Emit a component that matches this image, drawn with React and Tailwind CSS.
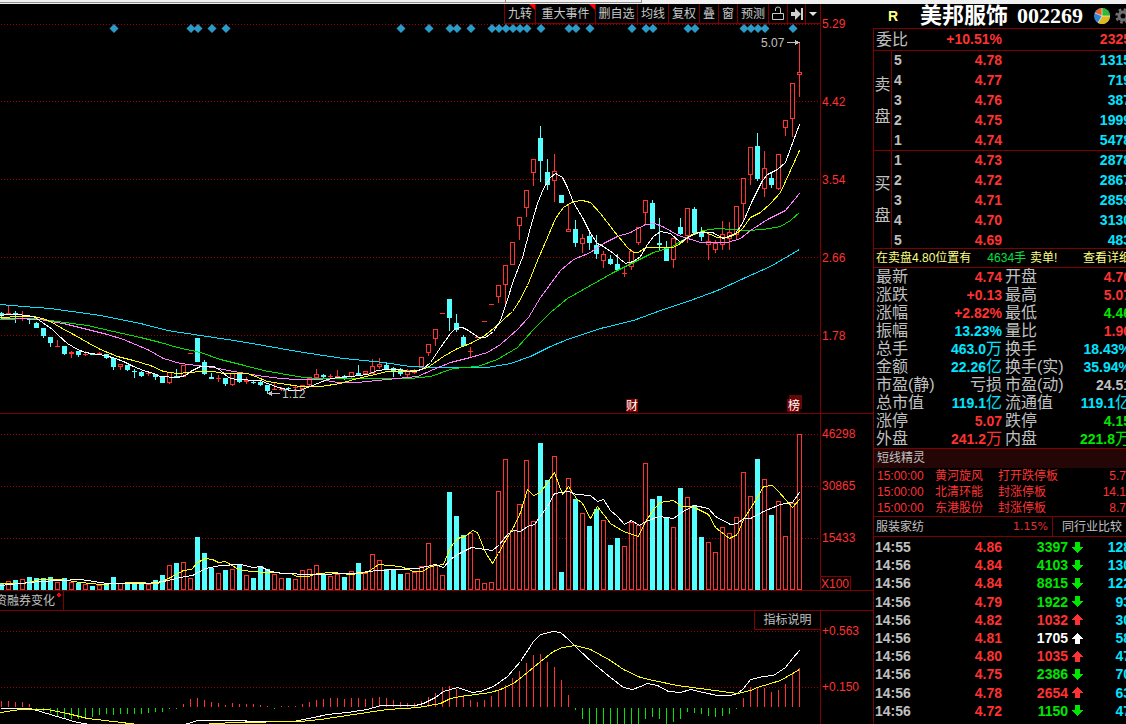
import React from 'react';

// [type, bodyTop, bodyBottom, wickTop, wickBottom], one entry per session
const CANDLES = [
  ['c', 313, 315, 312, 317], ['r', 313, 314, 305, 315], ['c', 313, 315, 311, 323], ['r', 316, 317, 311, 321],
  ['c', 319, 320, 318, 324], ['c', 323, 328, 322, 328], ['c', 328, 336, 328, 338], ['c', 337, 343, 337, 347],
  ['r', 346, 347, 340, 347], ['c', 346, 354, 346, 355], ['r', 352, 354, 351, 358], ['c', 351, 355, 351, 357],
  ['r', 354, 355, 351, 356], ['c', 354, 355, 353, 355], ['r', 353, 354, 352, 354], ['c', 354, 358, 354, 359],
  ['c', 358, 367, 358, 370], ['r', 364, 367, 364, 370], ['c', 365, 370, 365, 371], ['c', 371, 372, 369, 378],
  ['c', 372, 376, 371, 377], ['r', 373, 374, 371, 376], ['c', 374, 377, 374, 380], ['c', 377, 383, 377, 383],
  ['r', 372, 383, 372, 384], ['c', 376, 377, 369, 378], ['r', 365, 377, 365, 377], ['r', 353, 354, 353, 354],
  ['c', 338, 362, 338, 362], ['c', 362, 374, 360, 375], ['c', 377, 379, 373, 379], ['r', 378, 379, 375, 382],
  ['c', 378, 384, 378, 386], ['r', 373, 385, 373, 386], ['c', 373, 382, 373, 383], ['r', 380, 382, 377, 384],
  ['c', 382, 383, 380, 384], ['c', 382, 385, 381, 386], ['c', 385, 391, 385, 394], ['r', 389, 390, 383, 390],
  ['r', 389, 390, 387, 391], ['c', 388, 389, 387, 391], ['r', 387, 388, 385, 390], ['r', 385, 389, 385, 389],
  ['r', 378, 385, 378, 386], ['r', 374, 378, 369, 379], ['c', 375, 377, 374, 378], ['r', 376, 377, 374, 378],
  ['r', 376, 377, 370, 377], ['c', 376, 378, 375, 380], ['r', 372, 377, 372, 378], ['c', 373, 375, 365, 375],
  ['r', 371, 374, 371, 374], ['r', 366, 374, 359, 374], ['r', 364, 367, 358, 369], ['c', 365, 369, 363, 369],
  ['c', 368, 372, 367, 377], ['c', 369, 374, 368, 376], ['r', 370, 375, 369, 377], ['r', 371, 373, 369, 374],
  ['r', 357, 368, 357, 368], ['r', 344, 353, 344, 356], ['r', 329, 339, 329, 346], ['r', 313, 314, 313, 314],
  ['c', 299, 318, 299, 331], ['c', 323, 330, 314, 332], ['c', 337, 346, 335, 346], ['r', 351, 352, 347, 357],
  ['r', 337, 338, 337, 338], ['r', 321, 322, 321, 322], ['r', 304, 305, 304, 305], ['r', 285, 297, 285, 303],
  ['r', 265, 285, 265, 305], ['r', 242, 265, 242, 265], ['r', 217, 226, 217, 240], ['r', 190, 208, 190, 217],
  ['r', 159, 173, 159, 186], ['c', 138, 161, 126, 182], ['c', 172, 185, 159, 190], ['r', 171, 181, 154, 202],
  ['c', 195, 203, 195, 203], ['r', 229, 232, 204, 232], ['c', 229, 243, 220, 247], ['r', 238, 244, 234, 253],
  ['c', 236, 243, 231, 250], ['c', 245, 254, 235, 259], ['r', 254, 261, 251, 268], ['c', 259, 264, 255, 265],
  ['c', 264, 270, 254, 270], ['r', 273, 274, 268, 277], ['r', 251, 267, 251, 270], ['r', 227, 243, 227, 245],
  ['r', 200, 213, 200, 225], ['c', 203, 229, 200, 229], ['c', 243, 245, 218, 251], ['c', 248, 261, 241, 261],
  ['r', 238, 260, 238, 268], ['c', 227, 234, 218, 235], ['r', 208, 236, 208, 243], ['c', 209, 233, 207, 233],
  ['c', 233, 237, 227, 241], ['r', 241, 245, 234, 260], ['r', 243, 250, 240, 253], ['r', 234, 245, 221, 250],
  ['r', 232, 239, 222, 250], ['r', 206, 235, 206, 240], ['r', 178, 204, 178, 221], ['r', 147, 175, 147, 185],
  ['c', 146, 179, 133, 181], ['r', 168, 189, 151, 197], ['c', 178, 185, 172, 188], ['r', 154, 189, 154, 190],
  ['r', 120, 128, 120, 136], ['r', 83, 119, 83, 137], ['r', 72, 75, 43, 97],
];

// top edge of each volume bar
const VOLUME = [
  583, 581, 580, 579, 577, 578, 578, 577, 582, 578, 582, 583, 584, 586, 585, 584, 577, 583, 583, 582, 582, 584, 580,
  575, 565, 563, 562, 578, 537, 553, 568, 573, 570, 569, 564, 575, 578, 566, 569, 574, 578, 578, 579, 570, 569, 565,
  574, 576, 574, 577, 571, 563, 573, 554, 560, 569, 569, 574, 573, 572, 566, 543, 565, 575, 492, 516, 535, 533, 579,
  583, 582, 491, 459, 530, 504, 460, 521, 443, 480, 456, 572, 478, 499, 513, 526, 509, 520, 545, 538, 546, 522, 525,
  463, 499, 496, 517, 527, 488, 497, 505, 537, 542, 552, 527, 533, 517, 472, 496, 459, 479, 515, 501, 536, 503, 434,
];

// tip of each MACD bar, above or below the zero line
const MACD_ZERO = 707;
const MACD = [
  701, 701, 702, 702, 704, 709, 711, 713, 716, 718, 719, 719, 717, 717, 715, 714, 715, 714, 714, 714, 714, 713, 712,
  712, 709, 709, 704, 699, 698, 700, 702, 703, 705, 703, 704, 704, 704, 705, 706, 709, 706, 706, 706, 704, 702, 700,
  699, 698, 698, 699, 698, 698, 699, 698, 697, 698, 700, 702, 703, 703, 701, 697, 693, 687, 686, 689, 695, 700, 702,
  700, 696, 691, 685, 678, 671, 663, 655, 654, 662, 667, 680, 695, 710, 719, 724, 724, 724, 724, 724, 724, 724, 724,
  719, 717, 719, 724, 722, 719, 712, 713, 714, 716, 717, 716, 714, 709, 698, 687, 688, 688, 692, 690, 684, 673, 668,
];

const DIAMONDS = [
  16, 27, 28, 30, 32, 57, 61, 64, 65, 67, 70, 71, 72, 73, 74, 75, 77, 81, 82, 84, 90, 92, 93, 98, 99, 106, 107, 108,
  109, 113,
];

const PRICE_LINES = [
  {
    color: '#00e5ff',
    points:
      '0,304 23,306 50,308 100,315 140,323 167,330 200,335 240,341 280,348 303,352 343,358 383,362 410,366 437,367 487,367 510,363 530,356 550,346 567,339 600,328 633,320 660,310 690,300 717,290 743,278 770,266 799,249',
  },
  {
    color: '#00e600',
    points:
      '0,319 33,318 57,321 87,325 113,331 140,337 160,342 177,347 200,352 220,359 240,364 263,370 280,373 303,377 320,378 410,378 430,376 453,368 477,366 497,359 517,347 533,329 550,312 567,298 590,285 613,272 633,262 653,252 670,247 687,237 703,230 717,228 747,230 763,229 780,226 790,220 799,212',
  },
  {
    color: '#ff80ff',
    points:
      '0,318 18,318 40,319 50,321 63,323 83,328 107,334 123,339 147,349 163,358 180,363 213,367 233,371 257,375 280,378 297,379 320,379 337,382 357,382 397,378 417,376 433,369 450,362 470,357 487,352 500,344 517,329 528,317 540,297 560,270 573,259 590,252 603,243 617,236 630,232 645,224 654,223 662,226 678,235 700,242 727,242 740,238 750,230 767,219 785,210 799,193',
  },
  {
    color: '#ffff00',
    points:
      '0,317 20,316 33,316 42,318 50,321 60,327 73,334 87,342 100,349 117,356 133,360 150,365 163,371 177,373 200,371 213,371 223,373 247,373 255,376 267,381 280,383 300,386 320,386 340,383 353,379 370,375 387,371 403,371 417,370 427,367 433,363 443,356 457,348 470,343 483,336 493,328 503,319 512,311 518,302 527,285 537,260 547,237 555,218 563,207 573,201 582,200 590,202 600,213 613,230 627,247 633,252 638,252 645,247 673,247 680,243 693,233 703,231 717,237 727,237 735,234 742,228 750,217 760,212 770,203 780,192 790,170 799,150',
  },
  {
    color: '#ffffff',
    points:
      '0,315 7,314 17,314 25,315 33,316 42,322 52,329 58,335 67,343 77,349 85,352 97,354 105,355 115,358 123,361 133,366 143,370 153,373 160,376 177,377 185,375 190,371 200,366 213,366 220,370 228,377 235,379 260,380 267,383 278,387 290,390 300,390 307,387 317,383 327,379 337,377 350,376 367,374 377,370 387,369 397,369 410,371 415,371 423,368 430,362 440,347 450,333 455,328 462,327 468,330 478,337 485,337 493,331 500,320 506,302 513,280 522,257 530,227 537,203 543,188 550,177 555,173 562,177 567,187 573,202 582,217 590,233 597,243 603,246 613,253 625,263 633,261 640,256 647,244 653,236 660,231 670,233 680,242 687,237 698,232 712,232 723,238 735,233 742,223 752,200 762,180 767,174 777,169 785,162 793,140 799,124',
  },
];

const VOLUME_LINES = [
  {
    color: '#ffff00',
    points:
      '0,583 23,583 40,579 60,579 80,582 100,584 133,582 157,583 170,577 183,570 191,569 197,562 205,558 212,559 218,562 225,561 238,569 250,571 267,572 290,573 297,576 308,576 317,573 333,572 350,574 367,572 378,564 400,566 413,571 422,571 430,566 443,564 450,547 457,538 465,536 472,530 477,532 485,552 492,563 498,553 505,540 513,527 520,512 527,489 533,495 540,492 547,482 554,472 562,494 568,486 576,498 582,503 590,518 597,506 610,523 623,531 638,536 645,521 652,511 659,502 673,500 681,506 692,506 708,514 715,527 729,538 737,534 743,519 757,497 763,486 772,485 778,491 792,507 799,499',
  },
  {
    color: '#ffffff',
    points:
      '0,585 20,583 40,581 80,579 107,583 147,583 163,581 180,577 192,575 205,568 220,565 240,564 253,567 260,566 270,571 283,573 310,574 353,573 377,570 417,568 435,564 443,567 450,559 457,554 471,547 492,550 499,544 507,534 513,530 520,531 527,526 534,524 547,506 554,493 568,491 576,494 590,495 597,501 603,499 610,510 617,516 624,524 631,520 639,525 645,521 659,516 673,518 681,512 694,505 708,508 715,516 730,524 737,523 743,518 750,518 763,511 780,504 792,502 799,492',
  },
];

const MACD_LINES = [
  {
    color: '#ffffff',
    points:
      '0,708 30,708 43,712 60,717 77,722 90,724 110,727 170,727 188,723 197,720 293,721 313,717 327,714 347,712 367,709 380,705 415,705 423,703 435,697 443,691 457,687 472,692 480,691 493,686 507,676 520,661 533,641 540,634 553,631 560,632 568,639 577,648 593,663 610,677 623,687 632,689 640,686 647,683 657,685 668,691 680,692 690,689 703,692 717,695 730,695 737,693 743,688 750,679 763,676 773,675 785,667 792,658 799,650',
  },
  {
    color: '#ffff00',
    points:
      '0,712 20,709 47,709 67,713 87,718 113,721 137,724 200,724 233,722 300,721 320,719 353,714 387,709 418,707 440,703 450,698 460,696 490,692 500,689 513,683 527,672 540,661 553,651 562,647 575,645 590,649 610,660 623,669 640,677 653,680 677,685 707,689 737,693 750,690 757,687 780,680 799,669',
  },
];

const SELL = [
  ['5', '4.78', '1315'],
  ['4', '4.77', '719'],
  ['3', '4.76', '387'],
  ['2', '4.75', '1999'],
  ['1', '4.74', '5478'],
];

const BUY = [
  ['1', '4.73', '2878'],
  ['2', '4.72', '2867'],
  ['3', '4.71', '2859'],
  ['4', '4.70', '3130'],
  ['5', '4.69', '483'],
];

const RED = 'text-[#ff3232]';
const GREEN = 'text-[#00e600]';
const CYAN = 'text-[#00e5ff]';
const GREY = 'text-[#c0c0c0]';

// label, value, unit, color (left pair then right pair)
const STATS = [
  ['最新', '4.74', '', RED, '开盘', '4.70', '', RED],
  ['涨跌', '+0.13', '', RED, '最高', '5.07', '', RED],
  ['涨幅', '+2.82%', '', RED, '最低', '4.46', '', GREEN],
  ['振幅', '13.23%', '', CYAN, '量比', '1.90', '', RED],
  ['总手', '463.0', '万', CYAN, '换手', '18.43%', '', CYAN],
  ['金额', '22.26', '亿', CYAN, '换手(实)', '35.94%', '', CYAN],
  ['市盈(静)', '', '亏损', GREY, '市盈(动)', '24.51', '', GREY],
  ['总市值', '119.1', '亿', CYAN, '流通值', '119.1', '亿', CYAN],
  ['涨停', '5.07', '', RED, '跌停', '4.15', '', GREEN],
  ['外盘', '241.2', '万', RED, '内盘', '221.8', '万', GREEN],
];

const ALERTS = [
  ['15:00:00', '黄河旋风', '打开跌停板', '5.7'],
  ['15:00:00', '北清环能', '封涨停板', '14.1'],
  ['15:00:00', '东港股份', '封涨停板', '8.7'],
];

const TICKS = [
  ['14:55', '4.86', '3397', 'down', GREEN, '128'],
  ['14:56', '4.84', '4103', 'down', GREEN, '130'],
  ['14:56', '4.84', '8815', 'down', GREEN, '122'],
  ['14:56', '4.79', '1922', 'down', GREEN, '93'],
  ['14:56', '4.82', '1032', 'up', RED, '30'],
  ['14:56', '4.81', '1705', 'up', 'text-white', '58'],
  ['14:56', '4.80', '1035', 'up', RED, '47'],
  ['14:56', '4.75', '2386', 'down', GREEN, '70'],
  ['14:56', '4.78', '2654', 'up', RED, '63'],
  ['14:56', '4.72', '1150', 'down', GREEN, '47'],
];

const barX = (i) => i * 7 - 1;

const GridLines = ({ rows }) =>
  rows.map((y) => (
    <line key={y} x1="1" x2="819" y1={y + 0.5} y2={y + 0.5} stroke="#a00000" strokeDasharray="1 2" />
  ));

const Lines = ({ lines }) =>
  lines.map((line) => (
    <polyline key={line.color} points={line.points} fill="none" stroke={line.color} transform="translate(0.5 0.5)" />
  ));

const Bar = ({ x, top, bottom, type }) =>
  type === 'c' ? (
    <rect x={x} y={top} width="5" height={Math.max(bottom - top, 1)} fill="#54ffff" />
  ) : bottom - top < 2 ? (
    <rect x={x} y={top} width="5" height="1" fill="#ff3232" />
  ) : (
    <rect x={x + 0.5} y={top + 0.5} width="4" height={bottom - top - 1} fill="#000" stroke="#ff3232" />
  );

const PriceChart = () => (
  <svg
    viewBox="0 24 820 389"
    preserveAspectRatio="xMaxYMin meet"
    shapeRendering="crispEdges"
    className="block h-[389px] w-full"
  >
    <GridLines rows={[24, 101, 179, 257, 335]} />
    {CANDLES.map(([type, top, bottom, high, low], i) => (
      <g key={i}>
        <rect x={barX(i) + 2} y={high} width="1" height={low - high} fill={type === 'c' ? '#54ffff' : '#ff3232'} />
        <Bar x={barX(i)} top={top} bottom={bottom} type={type} />
      </g>
    ))}
    <Lines lines={PRICE_LINES} />
    {DIAMONDS.map((i) => (
      <path
        key={i}
        d={`M${barX(i) + 3} 24l4.5 4.5l-4.5 4.5l-4.5 -4.5z`}
        fill="#2a9bc8"
        shapeRendering="geometricPrecision"
      />
    ))}
    <g fill="#c0c0c0" fontSize="12" fontFamily='"Liberation Sans", sans-serif'>
      <text x="761" y="47">5.07</text>
      <path d="M787 42h8v-2l5 2.5l-5 2.500v-2h-8z" />
      <text x="282" y="398">1.12</text>
      <path d="M280 393h-8v-2l-5 2.500l5 2.500v-2h8z" />
    </g>
    <rect x="626" y="399" width="12" height="13" fill="#7a0000" />
    <rect x="789" y="395" width="13" height="14" fill="#600808" />
    <rect x="787" y="399" width="12" height="13" fill="#7a0000" />
    <g fill="#fff" fontSize="12" fontFamily='"Noto Sans CJK SC", sans-serif'>
      <text x="626" y="410">财</text>
      <text x="788" y="410">榜</text>
    </g>
  </svg>
);

const VolumeChart = () => (
  <svg
    viewBox="0 414 820 176"
    preserveAspectRatio="xMaxYMin meet"
    shapeRendering="crispEdges"
    className="block h-[176px] w-full"
  >
    <GridLines rows={[434, 486, 538]} />
    {VOLUME.map((top, i) => (
      <Bar key={i} x={barX(i)} top={top} bottom={590} type={CANDLES[i][0]} />
    ))}
    <Lines lines={VOLUME_LINES} />
  </svg>
);

const MacdChart = () => (
  <svg
    viewBox="0 611 820 113"
    preserveAspectRatio="xMaxYMin meet"
    shapeRendering="crispEdges"
    className="block h-[113px] w-full"
  >
    <GridLines rows={[631, 687]} />
    {MACD.map((tip, i) =>
      tip < MACD_ZERO ? (
        <rect key={i} x={barX(i) + 2} y={tip} width="1" height={MACD_ZERO - tip} fill="#ff3232" />
      ) : (
        <rect key={i} x={barX(i) + 2} y={MACD_ZERO + 1} width="1" height={tip - MACD_ZERO - 1} fill="#00e600" />
      )
    )}
    <Lines lines={MACD_LINES} />
  </svg>
);

const ToolButton = ({ width, flagged, label, children }) => (
  <button
    type="button"
    aria-label={label}
    className={`relative flex h-full items-center justify-center border-l border-[#800000] ${width}`}
  >
    {children}
    {flagged && (
      <svg viewBox="0 0 6 6" className="absolute top-0 right-0 size-1.5">
        <path d="M0 0h6v6z" fill="#ff0000" />
      </svg>
    )}
  </button>
);

const Toolbar = () => (
  <div className="flex h-5 justify-end">
    <div className="flex border-b border-[#800000] text-[12px] leading-4 whitespace-nowrap text-[#c8c8c8]">
      <ToolButton width="w-[31px]" flagged>九转</ToolButton>
      <ToolButton width="w-[60px]" flagged>重大事件</ToolButton>
      <ToolButton width="w-[42px]">删自选</ToolButton>
      <ToolButton width="w-[31px]">均线</ToolButton>
      <ToolButton width="w-[31px]">复权</ToolButton>
      <ToolButton width="w-[19px]">叠</ToolButton>
      <ToolButton width="w-[19px]">窗</ToolButton>
      <ToolButton width="w-[31px]">预测</ToolButton>
      <ToolButton width="w-[19px]" label="锁定">
        <svg viewBox="0 0 12 15" className="h-[15px] w-3" fill="none" stroke="#c8c8c8">
          <path d="M.5 7.500h11v6h-11zM3.500 5v-2q0-2 2.500-2t2.500 2v4.500" />
        </svg>
      </ToolButton>
      <ToolButton width="w-[18px]" label="最新">
        <svg viewBox="0 0 12 12" className="size-3" fill="#d0d0d0">
          <path d="M0 4h4v-4l6 6l-6 6v-4h-4zM10 0h2v12h-2z" />
        </svg>
      </ToolButton>
      <ToolButton width="w-[15px]" label="更多">
        <svg viewBox="0 0 8 4" className="h-1 w-2" fill="#e0e0e0">
          <path d="M0 0h8l-4 4z" />
        </svg>
      </ToolButton>
    </div>
  </div>
);

const Axis = ({ labels, step, children }) => (
  <div className="flex w-[53px] shrink-0 flex-col border-l border-[#800000] pt-3 text-[12px] leading-4 text-[#ff3232]">
    {labels.map((label, i) => (
      <div key={label} className={`pl-px ${i < labels.length - 1 ? step : ''}`}>
        {label}
      </div>
    ))}
    {children}
  </div>
);

const DepthSide = ({ name, rows, height }) => (
  <div className={`flex border-b border-[#800000] ${height}`}>
    <div className="flex w-[18px] shrink-0 flex-col items-center justify-center gap-3 border-r border-[#800000] text-[16px] leading-5 text-[#c0c0c0]">
      {name.map((char) => (
        <span key={char}>{char}</span>
      ))}
    </div>
    <div className="flex-1 text-[14px] font-bold">
      {rows.map(([level, price, volume]) => (
        <div key={level} className="flex h-5 pl-0.5 leading-[18px]">
          <span className="w-5 text-[#c0c0c0]">{level}</span>
          <span className="w-[88px] text-right text-[#ff3232]">{price}</span>
          <span className="flex-1 text-right text-[#00e5ff]">{volume}</span>
        </div>
      ))}
    </div>
  </div>
);

const Stat = ({ label, value, unit, color }) => (
  <>
    <dt className="text-[16px] whitespace-nowrap text-[#c0c0c0]">{label}</dt>
    <dd className={`flex items-center justify-end ${color}`}>
      <span className="text-[14px] font-bold">{value}</span>
      {unit && <span className="text-[16px]">{unit}</span>}
    </dd>
  </>
);

const Arrow = ({ direction }) => (
  <svg viewBox="0 0 11 11" fill="currentColor" className="size-[11px]" shapeRendering="crispEdges">
    {direction === 'up' ? (
      <path d="M5.500 0l5.500 6h-3v5h-5v-5h-3z" />
    ) : (
      <path d="M5.500 11l5.500-6h-3v-5h-5v5h-3z" />
    )}
  </svg>
);

const QuoteHeader = () => (
  <header className="flex h-6 items-center pl-[15px]">
    <span className="w-8 text-[14px] font-bold text-[#ffff80]">R</span>
    <h1 className="flex items-center gap-[9px] whitespace-nowrap text-white">
      <span className="text-[22px] leading-6 font-bold">美邦服饰</span>
      <span className="font-['Liberation_Serif',serif] text-[22px] leading-6 font-bold">002269</span>
    </h1>
    <button type="button" aria-label="板块" className="ml-[11px]">
      <svg viewBox="0 0 16 16" className="size-4">
        <circle cx="8" cy="8" r="8" fill="#2f86d8" />
        <path d="M8 8L1 5A8 8 0 0 1 8 0z" fill="#e8602c" />
        <path d="M8 8L8 0A8 8 0 0 1 16 8z" fill="#30b830" />
        <path d="M8 8h8A8 8 0 0 1 4 15z" fill="#e0b820" />
        <path d="M8 8v-8M8 8h8M8 8l-4 7M8 8l-7-3" stroke="#fff" strokeWidth=".6" />
      </svg>
    </button>
    <button type="button" aria-label="设置" className="ml-[5px]">
      <svg viewBox="0 0 16 16" className="size-4" fill="none" stroke="#707070">
        <circle cx="8" cy="8" r="4" strokeWidth="3" />
        <circle cx="8" cy="8" r="6.500" strokeWidth="2.500" strokeDasharray="2.600 2.500" />
      </svg>
    </button>
  </header>
);

const QuotePanel = () => (
  <aside className="flex w-[253px] shrink-0 flex-col overflow-hidden">
    <div className="flex w-[258px] flex-1 flex-col">
      <QuoteHeader />
      <div className="flex flex-1 flex-col border-t border-l border-[#800000]">
        <div className="flex h-[22px] items-center border-b border-[#800000] pl-0.5 text-[14px] font-bold text-[#ff3232]">
          <span className="w-12 text-[16px] font-normal text-[#c0c0c0]">委比</span>
          <span className="w-[78px] text-right">+10.51%</span>
          <span className="flex-1 text-right">2325</span>
        </div>
        <DepthSide name={['卖', '盘']} rows={SELL} height="h-[100px]" />
        <DepthSide name={['买', '盘']} rows={BUY} height="h-[98px]" />

        <div className="flex h-[19px] items-center border-b border-[#800000] pl-0.5 text-[12px] leading-4 whitespace-nowrap text-[#ffff80]">
          <span>在卖盘4.80位置有</span>
          <span className="ml-4 text-[#00e040]">4634手</span>
          <span className="ml-1">卖单!</span>
          <a href="#detail" className="ml-auto">
            查看详细
          </a>
        </div>

        <div className="border-b border-[#800000]">
          {STATS.map((s) => (
            <dl key={s[0]} className="grid h-[18px] grid-cols-[auto_1fr] leading-[18px]">
              <div className="flex w-[128px] justify-between pl-0.5">
                <Stat label={s[0]} value={s[1]} unit={s[2]} color={s[3]} />
              </div>
              <div className="flex justify-between pl-[3px]">
                <Stat label={s[4]} value={s[5]} unit={s[6]} color={s[7]} />
              </div>
            </dl>
          ))}
        </div>

        <h2 className="h-[19px] bg-[#240606] pl-[3px] text-[12px] leading-[19px] text-[#c0c0c0]">短线精灵</h2>
        <div className="border-b border-[#800000] text-[12px] leading-4 text-[#ff3232]">
          {ALERTS.map(([time, name, event, value]) => (
            <div key={name} className="flex pr-[5px] pl-[3px]">
              <span className="w-[58px]">{time}</span>
              <span className="w-[63px]">{name}</span>
              <span>{event}</span>
              <span className="ml-auto">{value}</span>
            </div>
          ))}
        </div>

        <div className="flex h-5 border-b border-[#800000] text-[12px] leading-5 whitespace-nowrap text-[#c0c0c0]">
          <span className="pl-0.5">服装家纺</span>
          <span className="ml-auto pr-1 font-['DejaVu_Sans',sans-serif] text-[11px] text-[#e03030]">1.15%</span>
          <a href="#peers" className="w-[79px] border-l border-[#800000] pl-[9px]">
            同行业比较
          </a>
        </div>

        <table className="mt-px mb-1 w-full flex-1 text-[14px] leading-[18px] font-bold">
          <tbody>
            {TICKS.map(([time, price, volume, direction, color, count], i) => (
              <tr key={i}>
                <td className="w-[42px] p-0 pl-px text-[#c0c0c0]">{time}</td>
                <td className="w-[86px] p-0 text-right text-[#ff3232]">{price}</td>
                <td className={`w-[66px] p-0 text-right ${color}`}>{volume}</td>
                <td className={`w-[15px] p-0 pl-1 ${color}`}>
                  <Arrow direction={direction} />
                </td>
                <td className="p-0 text-right text-[#00e5ff]">{count}</td>
              </tr>
            ))}
          </tbody>
        </table>
      </div>
    </div>
  </aside>
);

export default function App() {
  return (
    <div className="flex min-h-screen flex-col overflow-hidden bg-black font-['Liberation_Sans','Noto_Sans_CJK_SC',sans-serif]">
      <div className="h-1 bg-[#f0f0f0]">
        <div className="flex h-[3px] w-[57%] border-r border-b border-[#909090]">
          <div className="h-full w-[79%] border-r border-[#909090]" />
        </div>
      </div>
      <div className="flex flex-1">
        <main className="flex min-w-0 flex-1 flex-col">
          <section className="flex border-b border-[#800000]">
            <div className="min-w-0 flex-1">
              <Toolbar />
              <PriceChart />
            </div>
            <Axis labels={['5.29', '4.42', '3.54', '2.66', '1.78']} step="h-[78px]" />
          </section>

          <section className="flex border-b border-[#800000]">
            <div className="min-w-0 flex-1">
              <VolumeChart />
            </div>
            <Axis labels={['46298', '30865', '15433']} step="h-[52px]">
              <div className="mt-auto h-[14px] w-[30px] border-t border-r border-[#800000] leading-[14px]">
                X100
              </div>
            </Axis>
          </section>

          <div className="flex h-5 border-b border-[#800000]">
            <button
              type="button"
              className="relative flex w-16 items-center justify-end overflow-hidden border-r border-[#800000] pr-2 text-[12px] whitespace-nowrap text-[#c0c0c0]"
            >
              资融券变化
              <svg viewBox="0 0 4 4" className="absolute top-0.5 right-0.5 size-1" fill="#ff0000">
                <path d="M1 0h2v1h1v2h-1v1h-2v-1h-1v-2h1z" />
              </svg>
            </button>
          </div>

          <section className="flex flex-1">
            <div className="relative min-w-0 flex-1">
              <MacdChart />
              <button
                type="button"
                className="absolute top-0 right-0 h-[19px] w-[66px] border-b border-l border-[#800000] bg-black text-[12px] leading-[18px] text-[#c0c0c0]"
              >
                指标说明
              </button>
            </div>
            <Axis labels={['+0.563', '+0.150']} step="h-14" />
          </section>
        </main>
        <QuotePanel />
      </div>
    </div>
  );
}
